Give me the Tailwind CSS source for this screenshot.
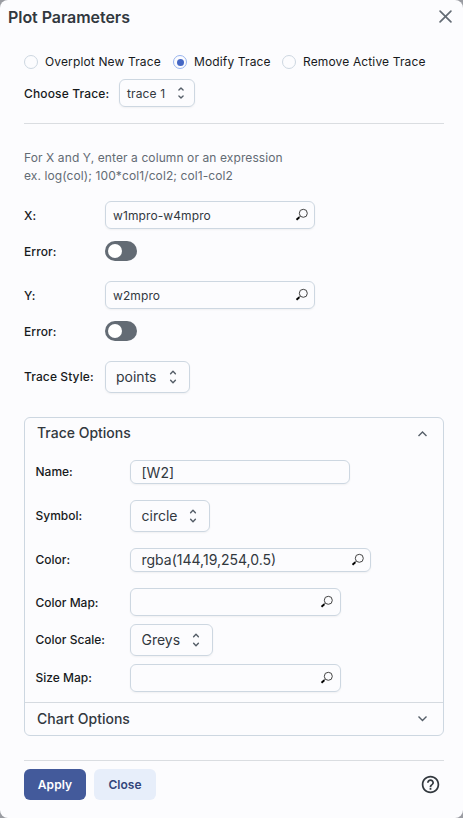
<!DOCTYPE html>
<html lang="en">
<head>
<meta charset="utf-8">
<title>Plot Parameters</title>
<script src="https://cdn.jsdelivr.net/npm/@tailwindcss/browser@4"></script>
</head>
<body class="bg-[#9a9ca2] font-['Inter',sans-serif] text-[#171a1c]">
<svg class="hidden">
  <symbol id="mag" viewBox="0 0 14 14"><circle cx="8.3" cy="5.3" r="4" fill="none" stroke="#444" stroke-width="1"/><path d="M5.3 8.2L4 9.4" stroke="#333" stroke-width="1"/><path d="M4.3 9.2L1.5 11.7" stroke="#000" stroke-width="1.9"/></symbol>
  <symbol id="unfold" viewBox="0 0 24 24"><path fill="#555e68" d="m12 5.83 2.46 2.46c.39.39 1.02.39 1.41 0 .39-.39.39-1.02 0-1.41L12.7 3.7a.9959.9959 0 0 0-1.41 0L8.12 6.88c-.39.39-.39 1.02 0 1.41.39.39 1.02.39 1.41 0L12 5.83zm0 12.34-2.46-2.46a.9959.9959 0 0 0-1.41 0c-.39.39-.39 1.02 0 1.41l3.17 3.18c.39.39 1.02.39 1.41 0l3.17-3.17c.39-.39.39-1.02 0-1.41a.9959.9959 0 0 0-1.41 0L12 18.17z"/></symbol>
</svg>
<main class="flex h-[818px] w-[463px] flex-col rounded-lg bg-[#fcfcfe]">
  <header class="flex h-[35px] items-center justify-between pl-2 pr-[11px]">
    <h1 class="pb-[2px] text-[16px] font-semibold leading-6 tracking-[-0.05px] text-[#32383e]">Plot Parameters</h1>
    <svg class="mt-[-2px] size-[13px]" viewBox="0 0 13 13" fill="none" stroke="#636b74" stroke-width="1.7" stroke-linecap="round"><path d="M1.1 1.1L11.9 11.9M11.9 1.1L1.1 11.9"/></svg>
  </header>
  <div class="flex flex-col pl-6 pr-[19px]">
    <div class="mt-[18px] flex h-[18px] items-center text-[12px] tracking-[0.14px]">
      <span class="size-[14px] rounded-full border border-[#cdd7e1]"></span><span class="ml-[7px] w-[128px] whitespace-nowrap">Overplot New Trace</span>
      <span class="flex size-[14px] items-center justify-center rounded-full border border-[#97b3ee]"><i class="size-[7px] rounded-full bg-[#4567c4]"></i></span><span class="ml-[7px] w-[88px] whitespace-nowrap">Modify Trace</span>
      <span class="size-[14px] rounded-full border border-[#cdd7e1]"></span><span class="ml-[7px] whitespace-nowrap">Remove Active Trace</span>
    </div>
    <div class="mt-2 flex h-7 items-center text-[12px] tracking-[0.14px]">
      <span class="w-[95px] pt-px font-medium">Choose Trace:</span>
      <div class="flex h-7 w-[76px] items-center justify-between rounded-md border border-[#cdd7e1] pl-[7px] pr-[5px] text-[#32383e] shadow-xs"><span class="pt-px">trace 1</span><svg class="size-4"><use href="#unfold"/></svg></div>
    </div>
    <div class="mt-4 h-px w-[420px] bg-[#dadde1]"></div>
    <p class="mt-[25px] text-[12px] leading-[18px] tracking-[0.1px] text-[#636b74]">For X and Y, enter a column or an expression<br>ex. log(col); 100*col1/col2; col1-col2</p>
    <div class="mt-4 flex h-7 items-center text-[12px] tracking-[0.1px]">
      <span class="w-[81px] pt-[2px] font-medium">X:</span>
      <div class="flex h-7 w-[210px] items-center justify-between rounded-md border border-[#cdd7e1] pl-[7px] pr-[5px] text-[#32383e] shadow-xs"><span class="pt-[2px]">w1mpro-w4mpro</span><svg class="size-[14px]"><use href="#mag"/></svg></div>
    </div>
    <div class="mt-3 flex h-5 items-center text-[12px] tracking-[0.1px]">
      <span class="w-[81px] pt-[2px] font-medium">Error:</span><span class="flex h-5 w-8 items-center rounded-full bg-[#636b74] pl-[3px]"><i class="size-[14px] rounded-full bg-white"></i></span>
    </div>
    <div class="mt-5 flex h-7 items-center text-[12px] tracking-[0.1px]">
      <span class="w-[81px] pt-[2px] font-medium">Y:</span>
      <div class="flex h-7 w-[210px] items-center justify-between rounded-md border border-[#cdd7e1] pl-[7px] pr-[5px] text-[#32383e] shadow-xs"><span class="pt-[2px]">w2mpro</span><svg class="size-[14px]"><use href="#mag"/></svg></div>
    </div>
    <div class="mt-3 flex h-5 items-center text-[12px] tracking-[0.1px]">
      <span class="w-[81px] pt-[2px] font-medium">Error:</span><span class="flex h-5 w-8 items-center rounded-full bg-[#636b74] pl-[3px]"><i class="size-[14px] rounded-full bg-white"></i></span>
    </div>
    <div class="mt-5 flex h-8 items-center">
      <span class="w-[81px] whitespace-nowrap text-[12px] font-medium tracking-[0.1px]">Trace Style:</span>
      <div class="flex h-8 w-[85px] items-center justify-between rounded-md border border-[#cdd7e1] pl-[10px] pr-[7px] text-[14px] text-[#32383e] shadow-xs"><span class="pb-[2px]">points</span><svg class="size-[18px]"><use href="#unfold"/></svg></div>
    </div>
    <section class="mt-6 flex h-[319px] w-[420px] flex-col rounded-md border border-[#cdd7e1] text-[12px]">
      <div class="flex h-[30px] items-center justify-between pl-3 pr-[15px] text-[14px] font-medium text-[#32383e]"><span class="pb-[2px]">Trace Options</span><svg class="size-[11px]" viewBox="0 0 11 11" fill="none" stroke="#555e68" stroke-width="1.4"><path d="M1.5 8L5.5 4L9.5 8"/></svg></div>
      <div class="mt-3 flex h-6 items-center pl-[10.500px]">
        <span class="w-[94.500px] font-medium">Name:</span>
        <div class="flex h-6 w-[220px] items-center rounded-md border border-[#cdd7e1] pl-[10.500px] text-[14px] text-[#32383e] shadow-xs">[W2]</div>
      </div>
      <div class="mt-4 flex h-8 items-center pl-[10.500px]">
        <span class="w-[94.500px] font-medium">Symbol:</span>
        <div class="flex h-8 w-[80px] items-center justify-between rounded-md border border-[#cdd7e1] pl-[10.500px] pr-[7px] text-[14px] text-[#32383e] shadow-xs"><span class="pb-[2px]">circle</span><svg class="size-[18px]"><use href="#unfold"/></svg></div>
      </div>
      <div class="mt-4 flex h-6 items-center pl-[10.500px]">
        <span class="w-[94.500px] font-medium">Color:</span>
        <div class="flex h-6 w-[241px] items-center justify-between rounded-md border border-[#cdd7e1] pl-[10.500px] pr-[5px] text-[14px] text-[#32383e] shadow-xs"><span class="pb-[2px]">rgba(144,19,254,0.5)</span><svg class="size-[14px]"><use href="#mag"/></svg></div>
      </div>
      <div class="mt-4 flex h-7 items-center pl-[10.500px]">
        <span class="w-[94.500px] pt-[2px] font-medium">Color Map:</span>
        <div class="flex h-7 w-[211px] items-center justify-end rounded-md border border-[#cdd7e1] pr-[6px] shadow-xs"><svg class="size-[14px]"><use href="#mag"/></svg></div>
      </div>
      <div class="mt-2 flex h-8 items-center pl-[10.500px]">
        <span class="w-[94.500px] font-medium">Color Scale:</span>
        <div class="flex h-8 w-[83px] items-center justify-between rounded-md border border-[#cdd7e1] pl-[10.500px] pr-[7px] text-[14px] text-[#32383e] shadow-xs"><span class="pb-[2px]">Greys</span><svg class="size-[18px]"><use href="#unfold"/></svg></div>
      </div>
      <div class="mt-2 flex h-7 items-center pl-[10.500px]">
        <span class="w-[94.500px] font-medium">Size Map:</span>
        <div class="flex h-7 w-[211px] items-center justify-end rounded-md border border-[#cdd7e1] pr-[6px] shadow-xs"><svg class="size-[14px]"><use href="#mag"/></svg></div>
      </div>
      <div class="mt-[10px] flex flex-1 items-center justify-between border-t border-[#d5dae0] pl-3 pr-[15px] text-[14px] font-medium text-[#32383e]"><span class="pb-[2px]">Chart Options</span><svg class="mt-[-1px] size-[11px]" viewBox="0 0 11 11" fill="none" stroke="#555e68" stroke-width="1.4"><path d="M1.5 3.5L5.5 7.5L9.5 3.5"/></svg></div>
    </section>
    <div class="mt-6 h-px w-[420px] bg-[#dadde1]"></div>
    <footer class="mt-2 flex h-[31px] w-[420px] items-center pr-[3px]">
      <button class="h-[31px] w-[62px] rounded-md bg-[#435a9b] text-[12px] font-semibold tracking-[0.1px] text-white">Apply</button>
      <button class="ml-2 h-[31px] w-[62px] rounded-md bg-[#e7eefa] text-[12px] font-semibold text-[#32457a]">Close</button>
      <svg class="ml-auto size-[21px]" viewBox="0 0 24 24" fill="#32383e"><path d="M11 18h2v-2h-2v2zm1-16C6.48 2 2 6.48 2 12s4.480 10 10 10 10-4.480 10-10S17.520 2 12 2zm0 18c-4.410 0-8-3.590-8-8s3.590-8 8-8 8 3.590 8 8-3.590 8-8 8zm0-14c-2.210 0-4 1.790-4 4h2c0-1.100.9-2 2-2s2 .9 2 2c0 2-3 1.750-3 5h2c0-2.250 3-2.500 3-5 0-2.210-1.790-4-4-4z"/></svg>
    </footer>
  </div>
</main>
</body>
</html>
